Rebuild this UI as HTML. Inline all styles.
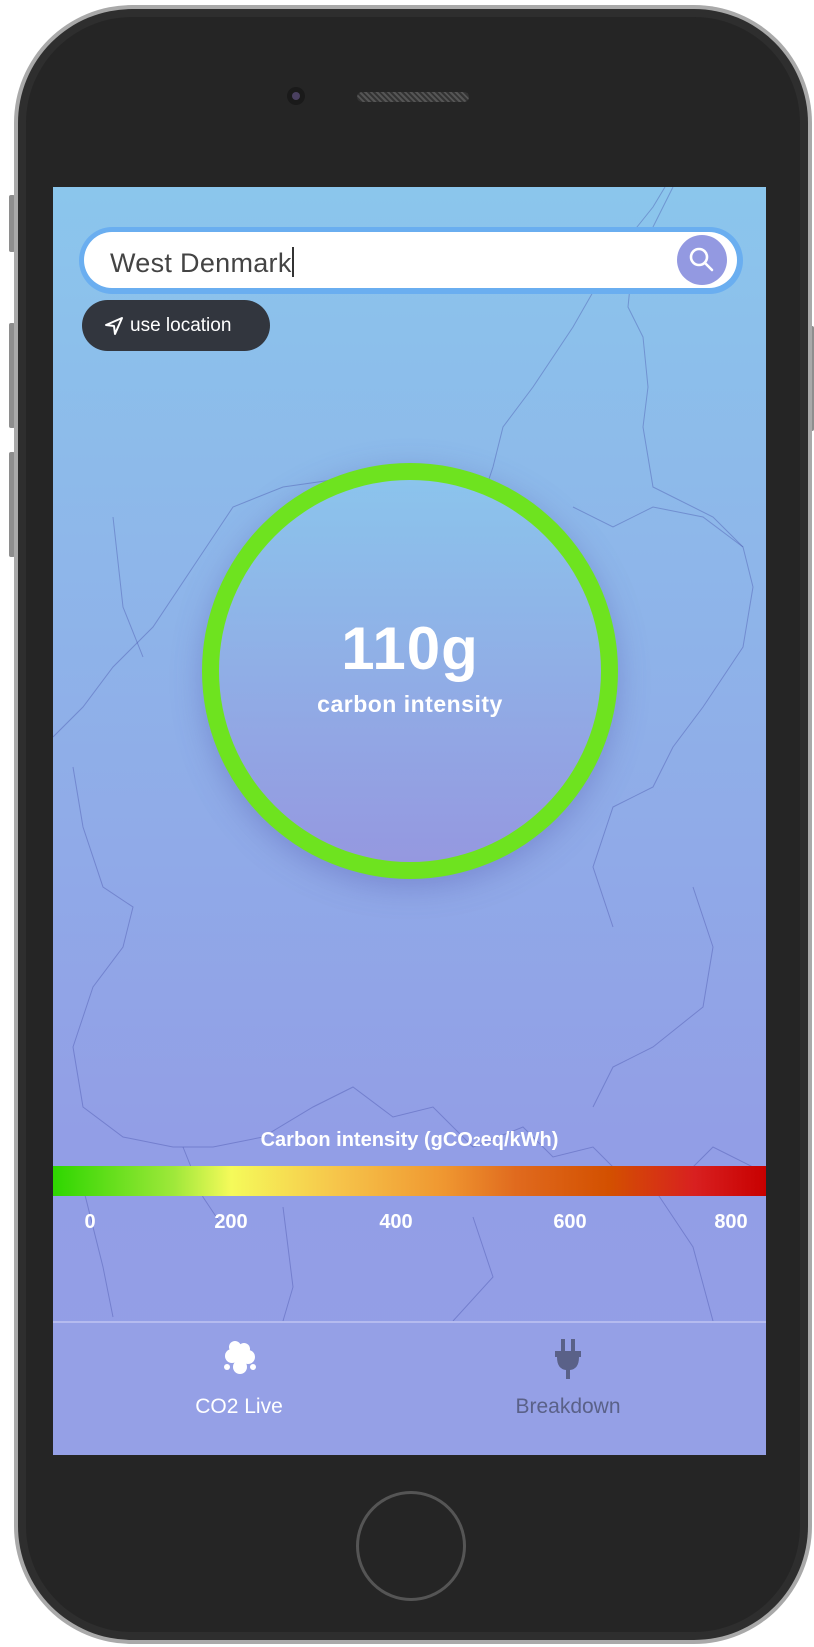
<!DOCTYPE html>
<html><head><meta charset="utf-8"><style>
*{margin:0;padding:0;box-sizing:border-box}
body{width:814px;height:1647px;background:#fff;position:relative;overflow:hidden;font-family:"Liberation Sans",sans-serif}
.phone{position:absolute;left:14px;top:5px;width:798px;height:1639px;border-radius:118px;background:#a9a9a9}
.phone .b{position:absolute;left:4px;top:4px;right:4px;bottom:4px;border-radius:114px;background:#2e2e2e}
.phone .c{position:absolute;left:12px;top:12px;right:12px;bottom:12px;border-radius:106px;background:#252525}
.side{position:absolute;background:#8e8e8e;width:6px;border-radius:2px}
.screen{position:absolute;left:53px;top:187px;width:713px;height:1268px;background:linear-gradient(#8bc6ec,#929ee6 75%,#949fe6);overflow:hidden}
.search{position:absolute;left:26px;top:40px;width:664px;height:67px;border-radius:34px;background:#6aaef0}
.search .in{position:absolute;left:5px;top:5px;right:6px;bottom:6px;border-radius:28px;background:#fff}
.search .t{position:absolute;left:26px;top:15px;font-size:27px;color:#444;letter-spacing:0.3px}
.search .cur{display:inline-block;width:2px;height:30px;background:#333;vertical-align:-5px}
.btn{position:absolute;left:593px;top:3px;width:50px;height:50px;border-radius:50%;background:#9399e1}
.loc{position:absolute;left:29px;top:113px;width:188px;height:51px;border-radius:26px;background:#32363e;color:#fff;font-size:19px;line-height:51px;padding-left:48px}
.ring{position:absolute;left:149px;top:276px;width:416px;height:416px;border-radius:50%;background:#6ee31f;box-shadow:0 8px 30px rgba(80,80,170,.35)}
.ring .in{position:absolute;left:17px;top:17px;right:17px;bottom:17px;border-radius:50%;background:linear-gradient(#8bc4ec,#9598e0);text-align:center;color:#fff}
.big{position:absolute;left:0;right:0;top:134px;font-size:60px;font-weight:bold;letter-spacing:1px}
.sub{position:absolute;left:0;right:0;top:211px;font-size:23px;font-weight:bold;letter-spacing:.5px}
.lt{position:absolute;left:0;right:0;top:942px;text-align:center;color:#fff;font-size:20px;font-weight:bold}
.bar{position:absolute;left:0;right:0;top:979px;height:30px;background:linear-gradient(90deg,#2ed600 0%,#9fe83a 17%,#f5fa5a 25%,#f6c44a 40%,#ef9630 55%,#e06a1e 65%,#d35000 78%,#d82020 90%,#c80000 100%)}
.lab{position:absolute;top:1024px;color:#fff;font-size:20px;font-weight:bold;transform:translateX(-50%)}
.sep{position:absolute;left:0;right:0;top:1134px;height:2px;background:#b5bbef}
.nav{position:absolute;left:0;right:0;top:1136px;bottom:0;background:#95a0e6}
.nl{position:absolute;top:1208px;font-size:21px;transform:translateX(-50%)}
</style></head><body>
<div class="side" style="left:9px;top:195px;height:57px"></div>
<div class="side" style="left:9px;top:323px;height:105px"></div>
<div class="side" style="left:9px;top:452px;height:105px"></div>
<div class="side" style="left:808px;top:326px;height:105px"></div>
<div class="phone"><div class="b"></div><div class="c"></div></div>
<div style="position:absolute;left:287px;top:87px;width:18px;height:18px;border-radius:50%;background:#1a1a1a"><div style="position:absolute;left:5px;top:5px;width:8px;height:8px;border-radius:50%;background:#4a4060"></div></div>
<div style="position:absolute;left:357px;top:92px;width:112px;height:10px;border-radius:5px;background:repeating-linear-gradient(45deg,#555 0 2px,#333 2px 4px)"></div>
<div style="position:absolute;left:356px;top:1491px;width:110px;height:110px;border-radius:50%;border:3px solid #555"></div>
<div class="screen">
<svg width="713" height="1268" style="position:absolute;left:0;top:0" fill="none" stroke="rgba(70,80,170,.4)" stroke-width="1">
<path d="M612 0 L600 20 L560 70 L520 140 L480 200 L450 240 L440 280 L420 340 L400 380"/>
<path d="M620 0 L600 40 L580 70 L575 120 L590 150 L595 200 L590 240 L600 300 L660 330 L690 360"/>
<path d="M0 550 L30 520 L60 480 L100 440 L140 380 L180 320 L230 300 L300 290"/>
<path d="M20 580 L30 640 L50 700 L80 720 L70 760 L40 800 L20 860 L30 920 L70 950 L120 960 L160 960 L210 950 L260 920 L300 900 L340 930 L380 920 L420 960 L470 940 L500 970 L540 960 L580 1000 L620 1000 L660 960 L700 980 L713 990"/>
<path d="M520 320 L560 340 L600 320 L650 330 L690 360 L700 400 L690 460 L650 520 L620 560 L600 600 L560 620 L540 680 L560 740"/>
<path d="M640 700 L660 760 L650 820 L600 860 L560 880 L540 920"/>
<path d="M30 1000 L50 1080 L60 1130"/><path d="M230 1020 L240 1100 L230 1134"/>
<path d="M420 1030 L440 1090 L400 1134"/><path d="M600 1000 L640 1060 L660 1134"/>
<path d="M130 960 L150 1010 L170 1040"/><path d="M60 330 L70 420 L90 470"/>
</svg>
<div class="search"><div class="in"><div class="t">West Denmark<span class="cur"></span></div>
<div class="btn"><svg width="50" height="50" viewBox="0 0 50 50" fill="none" stroke="#fff" stroke-width="2.6" stroke-linecap="round"><circle cx="22" cy="22" r="8"/><path d="M28 28 L35 35"/></svg></div></div></div>
<div class="loc"><svg style="position:absolute;left:22px;top:16px" width="20" height="20" viewBox="0 0 20 20" fill="none" stroke="#fff" stroke-width="2" stroke-linejoin="round"><path d="M18 2 L2 9 L10 10 L11 18 Z"/></svg>use location</div>
<div class="ring"><div class="in"><div class="big">110g</div><div class="sub">carbon intensity</div></div></div>
<div class="lt">Carbon intensity (gCO<span style="font-size:14px">2</span>eq/kWh)</div>
<div class="bar"></div>
<div class="lab" style="left:37px">0</div><div class="lab" style="left:178px">200</div><div class="lab" style="left:343px">400</div><div class="lab" style="left:517px">600</div><div class="lab" style="left:678px">800</div>
<div class="sep"></div><div class="nav"></div>
<svg style="position:absolute;left:167px;top:1152px" width="40" height="40" viewBox="0 0 40 40" fill="#fff"><circle cx="15" cy="8" r="6"/><circle cx="24" cy="10" r="6"/><circle cx="12" cy="17" r="7"/><circle cx="28" cy="18" r="7"/><circle cx="20" cy="16" r="8"/><circle cx="20" cy="28" r="7"/><circle cx="7" cy="28" r="3"/><circle cx="33" cy="28" r="3"/></svg>
<svg style="position:absolute;left:500px;top:1152px" width="30" height="40" viewBox="0 0 30 40" fill="#5a6188"><rect x="8" y="0" width="4" height="12"/><rect x="18" y="0" width="4" height="12"/><path d="M2 12 H28 V18 H26 Q26 30 17 31 V40 H13 V31 Q4 30 4 18 H2 Z"/></svg>
<div class="nl" style="left:186px;color:#fff">CO2 Live</div>
<div class="nl" style="left:515px;color:#5a6188">Breakdown</div>
</div>
</body></html>
